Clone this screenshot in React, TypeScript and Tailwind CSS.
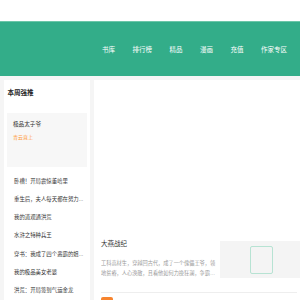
const navItems = ["书库", "排行榜", "精品", "漫画", "充值", "作家专区"];

const weekList = [
  "卧槽！开局震惊董哈里",
  "重生后，夫人每天都在努力...",
  "我的道观通洪荒",
  "水浒之特种兵王",
  "穿书：我成了四个恶霸的姐...",
  "我的极品美女老婆",
  "洪荒：开局签到气运金龙",
];

export default function App() {
  return (
    <div
      className="h-[300px] w-[300px] overflow-hidden bg-[#f5f5f5]"
      style={{ fontFamily: '"Liberation Sans", "Noto Sans CJK SC", sans-serif' }}
    >
      {/* top strip */}
      <div className="h-[21px] bg-white" />

      {/* header */}
      <header className="flex h-[55px] items-center justify-end gap-[17.5px] border-t border-[#6cc6a8] bg-[#33ad89] pr-[13px] pt-[2px]">
        {navItems.map((item) => (
          <a key={item} className="text-[6.5px] leading-none text-white">
            {item}
          </a>
        ))}
      </header>

      <main className="flex gap-[4px] pl-[4px] pt-[4px]">
        {/* left column */}
        <aside className="h-[230px] w-[86px] shrink-0 bg-white px-[3px] pt-[10px]">
          <h3 className="pl-[0.5px] text-[6.5px] font-bold leading-none text-[#222]">
            本周强推
          </h3>
          <div className="mt-[16px] h-[54px] bg-[#f7f7f7] px-[6px] pt-[9px]">
            <p className="text-[5.6px] leading-none text-[#333]">极品太子爷</p>
            <p className="mt-[8px] text-[5px] leading-none text-[#ff9b3d]">青云直上</p>
          </div>
          <ul className="mt-[5px] pl-[7px]">
            {weekList.map((t) => (
              <li
                key={t}
                className="flex h-[18.3px] items-center whitespace-nowrap text-[5.4px] text-[#333]"
              >
                {t}
              </li>
            ))}
          </ul>
        </aside>

        {/* right column */}
        <section className="w-[210px] shrink-0 bg-white">
          <div className="h-[161px]" />
          <div className="mx-[7px] flex border-b border-[#eeeeee] pb-[14px]">
            <div className="w-[119px] shrink-0">
              <h4 className="text-[6.5px] leading-none text-[#333]">大燕战纪</h4>
              <p className="mt-[10px] line-clamp-2 pr-[2px] text-[5.2px] leading-[10px] text-[#9a9a9a]">
                工科高材生，穿越回古代，成了一个傀儡王爷，领地贫瘠，人心涣散，且看他如何力挽狂澜，争霸天下，成就一代帝王霸业。
              </p>
            </div>
            <div className="flex h-[37px] w-[83px] shrink-0 items-center justify-center bg-[#f4f4f4]">
              <div className="h-[28px] w-[23px] rounded-[2px] border border-[#b7e3d3]" />
            </div>
          </div>
          <div className="mx-[7px] mt-[4px] flex">
            <span className="h-[12px] w-[12px] rounded-[2px] bg-[#f7842e]" />
          </div>
        </section>
      </main>
    </div>
  );
}
